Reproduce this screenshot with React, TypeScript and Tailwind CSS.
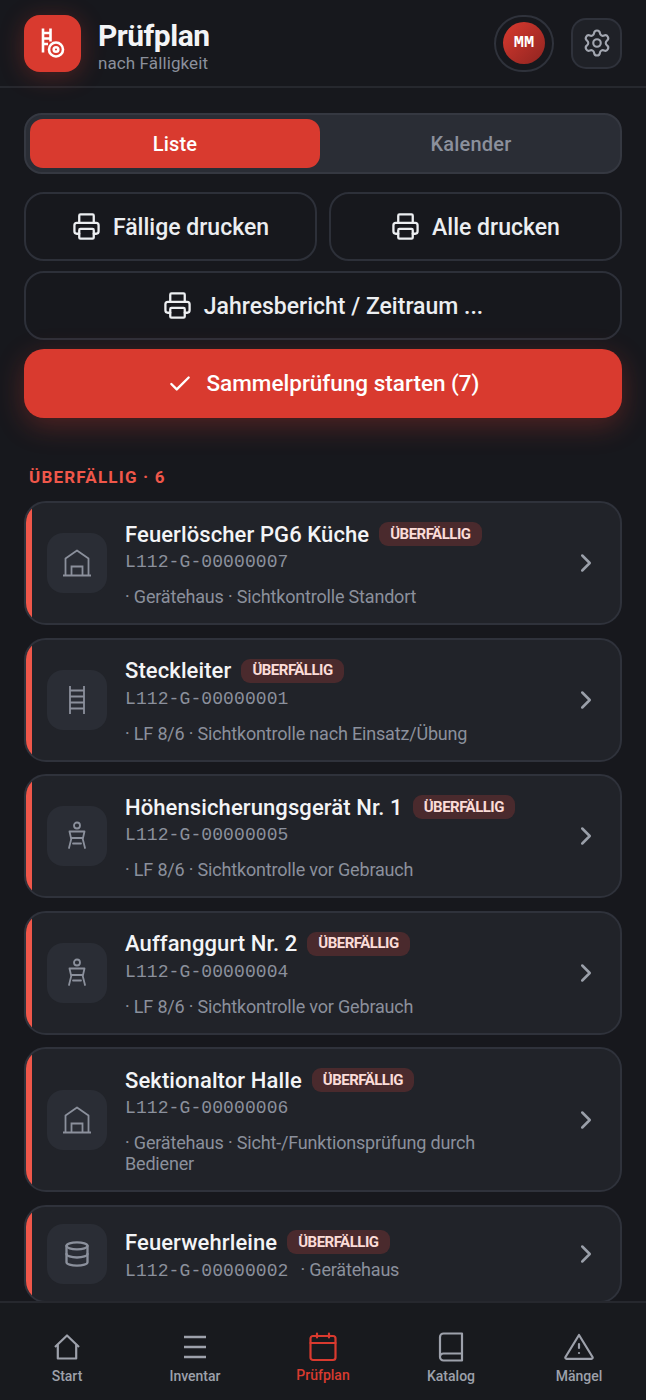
import { Check, ChevronRight, Database, Printer, Settings } from 'lucide-react'
import type { ReactNode } from 'react'

const WarehouseIcon = () => (
  <svg width="30" height="30" viewBox="0 0 30 30" fill="none" stroke="currentColor" strokeWidth="1.8">
    <path d="M1 27.500h28" />
    <path d="M3.500 27.500V10.500L15 2.500l11.500 8v17" strokeLinejoin="round" />
    <path d="M9.500 27.500V18.500h11v9" />
  </svg>
)

const LadderIcon = () => (
  <svg width="30" height="30" viewBox="0 0 30 30" fill="none" stroke="currentColor" strokeWidth="1.8">
    <path d="M8 1v28M22 1v28" />
    <path d="M8 5.500h14M8 11.500h14M8 17.500h14M8 23.500h14" />
  </svg>
)

const HarnessIcon = () => (
  <svg width="30" height="30" viewBox="0 0 30 30" fill="none" stroke="currentColor" strokeWidth="1.8" strokeLinecap="round">
    <circle cx="15" cy="4.500" r="3" />
    <path d="M7.500 10.500h15l-1.500 6.500h-12z" strokeLinejoin="round" />
    <path d="M9.500 17 7 27M20.500 17 23 27" />
    <path d="M11 22.500h8" />
  </svg>
)

const HomeIcon = () => (
  <svg width="28" height="28" viewBox="0 0 28 28" fill="none" stroke="currentColor" strokeWidth="2.200" strokeLinejoin="round">
    <path d="M2 14 14 2.500 26 14" />
    <path d="M4.800 11.500V25.500h18.400V11.500" />
  </svg>
)

const MenuIcon = () => (
  <svg width="28" height="28" viewBox="0 0 28 28" fill="none" stroke="currentColor" strokeWidth="2.400">
    <path d="M3 4h22M3 14h22M3 24h22" />
  </svg>
)

const CalendarIcon = () => (
  <svg width="28" height="30" viewBox="0 0 28 30" fill="none" stroke="currentColor" strokeWidth="2.200" strokeLinecap="round">
    <rect x="1.500" y="4" width="25" height="24" rx="2.500" />
    <path d="M1.500 11h25M8 1.500v4M20 1.500v4" />
  </svg>
)

const BookIcon = () => (
  <svg width="28" height="30" viewBox="0 0 28 30" fill="none" stroke="currentColor" strokeWidth="2.200" strokeLinejoin="round">
    <path d="M25 1.500H6.500a3.500 3.500 0 0 0-3.500 3.500v20a3.500 3.500 0 0 0 3.500 3.500H25z" />
    <path d="M3 24a3.500 3.500 0 0 1 3.500-2.500H25" />
  </svg>
)

const WarningIcon = () => (
  <svg width="30" height="28" viewBox="0 0 30 28" fill="none" stroke="currentColor" strokeWidth="2.200" strokeLinejoin="round" strokeLinecap="round">
    <path d="M15 2 28.500 24a1.200 1.200 0 0 1-1 1.800h-25a1.200 1.200 0 0 1-1-1.800z" />
    <path d="M15 11v4" />
    <path d="M15 20h.01" />
  </svg>
)

const LogoIcon = () => (
  <svg width="24" height="30" viewBox="0 0 24 30" fill="none" stroke="white" strokeWidth="2.600">
    <path d="M2 0.500v24M9.500 0.500v13" />
    <path d="M2 5h7.500M2 10.500h7.500M2 16h5" />
    <circle cx="15" cy="21.500" r="7" />
    <circle cx="15" cy="21.500" r="2.300" />
  </svg>
)

const PrintButton = ({ label, className }: { label: string; className?: string }) => (
  <button
    type="button"
    className={`h-[69px] rounded-[20px] border-2 border-[#2d3039] flex items-center justify-center gap-[12px] text-[23px] font-medium text-[#eceef1] ${className ?? ''}`}
  >
    <Printer className="w-[29px] h-[29px]" strokeWidth={1.9} />
    <span className="pt-[4px]">{label}</span>
  </button>
)

interface Item {
  name: string
  code: string
  meta: string
  icon: ReactNode
}

const items: Item[] = [
  { name: 'Feuerlöscher PG6 Küche', code: 'L112-G-00000007', meta: '· Gerätehaus · Sichtkontrolle Standort', icon: <WarehouseIcon /> },
  { name: 'Steckleiter', code: 'L112-G-00000001', meta: '· LF 8/6 · Sichtkontrolle nach Einsatz/Übung', icon: <LadderIcon /> },
  { name: 'Höhensicherungsgerät Nr. 1', code: 'L112-G-00000005', meta: '· LF 8/6 · Sichtkontrolle vor Gebrauch', icon: <HarnessIcon /> },
  { name: 'Auffanggurt Nr. 2', code: 'L112-G-00000004', meta: '· LF 8/6 · Sichtkontrolle vor Gebrauch', icon: <HarnessIcon /> },
  { name: 'Sektionaltor Halle', code: 'L112-G-00000006', meta: '· Gerätehaus · Sicht-/Funktionsprüfung durch Bediener', icon: <WarehouseIcon /> },
]

const Badge = () => (
  <span className="ml-[10px] h-[24px] px-[11px] rounded-[9px] bg-[#4a2a2d] text-[#fbdcd8] text-[15px] font-bold tracking-[-0.5px] flex items-center shrink-0">
    ÜBERFÄLLIG
  </span>
)

const IconBox = ({ children }: { children: ReactNode }) => (
  <div className="w-[60px] h-[60px] rounded-[16px] bg-[#2a2d35] text-[#8b909c] flex items-center justify-center shrink-0">
    {children}
  </div>
)

const ItemCard = ({ item }: { item: Item }) => (
  <div className="relative shrink-0 rounded-[22px] border-2 border-[#2f323b] bg-[#212329] overflow-hidden pl-[21px] pr-[19px] py-[16px] flex items-center">
    <div className="absolute left-0 top-0 bottom-0 w-[6px] bg-[#f0574a]" />
    <IconBox>{item.icon}</IconBox>
    <div className="ml-[18px] flex-1 min-w-0 pr-[8px]">
      <div className="flex items-center h-[30px]">
        <span className="text-[22px] font-medium text-[#f3f4f6] tracking-[0.1px] whitespace-nowrap">{item.name}</span>
        <Badge />
      </div>
      <div className="h-[24px] mt-[1px] font-['Liberation_Mono',monospace] text-[18px] leading-[24px] text-[#8b909c] tracking-[0.1px]">
        {item.code}
      </div>
      <div className="mt-[12px] max-w-[400px] text-[18px] leading-[21px] tracking-[-0.18px] text-[#8b909c]">{item.meta}</div>
    </div>
    <ChevronRight className="w-[30px] h-[30px] text-[#9a9fa9] shrink-0" strokeWidth={2} />
  </div>
)

const NavItem = ({ label, icon, active }: { label: string; icon: ReactNode; active?: boolean }) => (
  <div className={`flex flex-col items-center flex-1 ${active ? 'text-[#d93a2f]' : 'text-[#9da1ab]'}`}>
    <div className="h-[32px] flex items-center justify-center">{icon}</div>
    <span className={`text-[14px] leading-[20px] font-medium ${active ? 'mt-[2px]' : 'mt-[3px]'}`}>{label}</span>
  </div>
)

export default function App() {
  return (
    <div className="h-[1400px] w-[646px] overflow-hidden flex flex-col bg-[#17181d] font-['Roboto',sans-serif]">
      {/* Header */}
      <header className="h-[88px] shrink-0 border-b-2 border-[#26282e] flex items-center pl-[24px] pr-[24px]">
        <div className="w-[57px] h-[57px] rounded-[16px] bg-[#d93a2f] flex items-center justify-center shadow-[0_4px_24px_rgba(217,58,47,0.3)]">
          <LogoIcon />
        </div>
        <div className="ml-[17px] pt-[6px]">
          <div className="text-[30px] leading-[34px] font-bold tracking-[-0.5px] text-[#f3f4f6]">Prüfplan</div>
          <div className="text-[17px] leading-[20px] tracking-[0.1px] text-[#8b909c]">nach Fälligkeit</div>
        </div>
        <div className="ml-auto w-[60px] h-[57px] rounded-full border-2 border-[#2f323b] flex items-center justify-center">
          <div className="w-[42px] h-[42px] rounded-full bg-gradient-to-br from-[#d93a2f] to-[#8f2420] flex items-center justify-center font-['Liberation_Mono',monospace] font-bold text-[17px] text-white">
            MM
          </div>
        </div>
        <div className="ml-[17px] w-[51px] h-[51px] rounded-[15px] border-2 border-[#2f323b] bg-[#1f2127] flex items-center justify-center text-[#a2a6b0]">
          <Settings className="w-[30px] h-[30px]" strokeWidth={1.7} />
        </div>
      </header>

      {/* Main */}
      <main className="flex-1 min-h-0 overflow-hidden px-[24px] pt-[25px] flex flex-col">
        <div className="h-[61px] shrink-0 rounded-[18px] border-2 border-[#353841] bg-[#2a2d35] p-[4px] flex gap-[6px]">
          <div className="flex-1 rounded-[13px] bg-[#d93a2f] text-white text-[20px] font-medium tracking-[0.2px] flex items-center justify-center">Liste</div>
          <div className="flex-1 text-[#8b909c] text-[20px] font-medium tracking-[0.2px] flex items-center justify-center">Kalender</div>
        </div>

        <div className="mt-[18px] flex gap-[12px] shrink-0">
          <PrintButton label="Fällige drucken" className="flex-1" />
          <PrintButton label="Alle drucken" className="flex-1" />
        </div>
        <PrintButton label="Jahresbericht / Zeitraum ..." className="mt-[10px] shrink-0" />

        <button
          type="button"
          className="mt-[9px] h-[69px] shrink-0 rounded-[20px] bg-[#d93a2f] text-white text-[22.500px] font-medium flex items-center justify-center gap-[14px] shadow-[0_8px_28px_rgba(217,58,47,0.3)]"
        >
          <Check className="w-[26px] h-[26px]" strokeWidth={2.2} />
          Sammelprüfung starten (7)
        </button>

        <div className="mt-[49px] ml-[5px] text-[#f0574a] text-[17px] leading-[20px] font-bold tracking-[1.2px] shrink-0">ÜBERFÄLLIG · 6</div>

        <div className="mt-[14px] flex flex-col gap-[12.500px]">
          {items.map((item) => (
            <ItemCard key={item.name} item={item} />
          ))}

          <div className="relative shrink-0 h-[98px] rounded-[22px] border-2 border-[#2f323b] bg-[#212329] overflow-hidden pl-[21px] pr-[19px] flex items-center">
            <div className="absolute left-0 top-0 bottom-0 w-[6px] bg-[#f0574a]" />
            <IconBox>
              <Database className="w-[28px] h-[28px]" strokeWidth={2} />
            </IconBox>
            <div className="ml-[18px] flex-1 min-w-0 pt-[3px]">
              <div className="flex items-center h-[30px]">
                <span className="text-[22px] font-medium text-[#f3f4f6] tracking-[0.1px] whitespace-nowrap">Feuerwehrleine</span>
                <Badge />
              </div>
              <div className="mt-[1px] flex items-baseline">
                <span className="font-['Liberation_Mono',monospace] text-[18px] leading-[24px] text-[#8b909c] tracking-[0.1px]">L112-G-00000002</span>
                <span className="ml-[12px] text-[18px] leading-[24px] tracking-[-0.18px] text-[#8b909c]">· Gerätehaus</span>
              </div>
            </div>
            <ChevronRight className="w-[30px] h-[30px] text-[#9a9fa9] shrink-0" strokeWidth={2} />
          </div>
        </div>
      </main>

      {/* Bottom nav */}
      <nav className="h-[99px] shrink-0 border-t-2 border-[#26282e] bg-[#181a1e] px-[3px] pt-[28px] flex items-start">
        <NavItem label="Start" icon={<HomeIcon />} />
        <NavItem label="Inventar" icon={<MenuIcon />} />
        <NavItem label="Prüfplan" icon={<CalendarIcon />} active />
        <NavItem label="Katalog" icon={<BookIcon />} />
        <NavItem label="Mängel" icon={<WarningIcon />} />
      </nav>
    </div>
  )
}
